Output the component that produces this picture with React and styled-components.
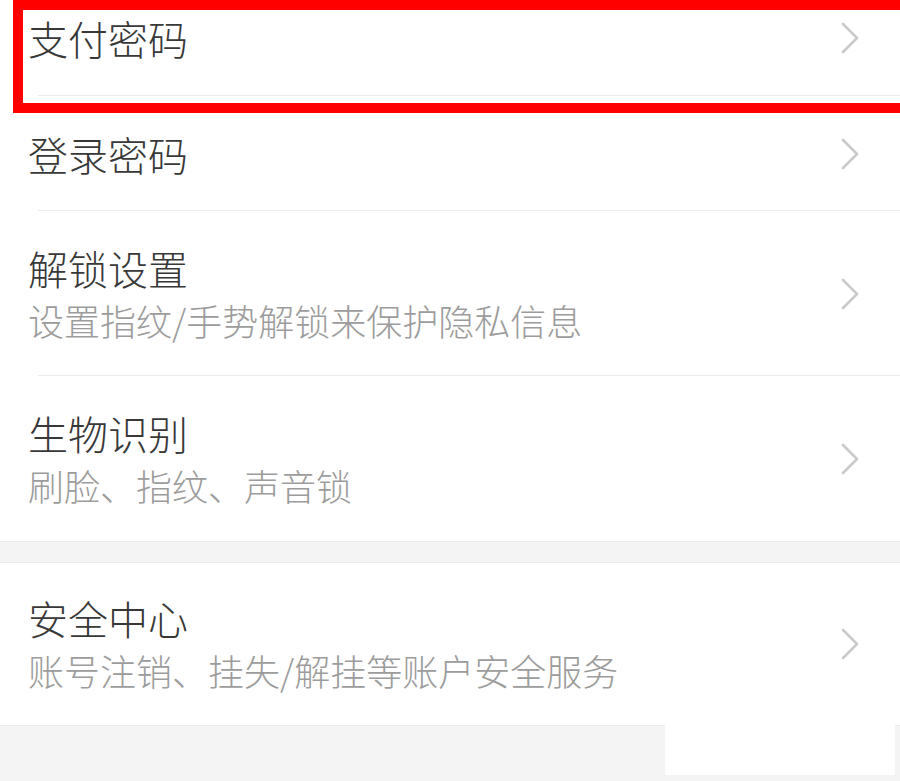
import React from "react";
import styled, { createGlobalStyle } from "styled-components";

const GlobalStyle = createGlobalStyle`
  html, body {
    margin: 0;
    padding: 0;
    background: #f4f4f4;
  }
  body {
    font-family: "Noto Sans CJK SC", "Noto Sans", sans-serif;
  }
`;

const Page = styled.div`
  position: relative;
  width: 900px;
  height: 781px;
  overflow: hidden;
  background: #f4f4f4;
`;

const Group = styled.div`
  background: #ffffff;
  border-bottom: 1px solid #e9e9e9;
  border-top: ${(p) => (p.$top ? "1px solid #e9e9e9" : "none")};
`;

const Gap = styled.div`
  height: 20px;
`;

const Row = styled.div`
  display: flex;
  align-items: center;
  justify-content: space-between;
  height: ${(p) => p.$h}px;
  box-sizing: border-box;
  padding: ${(p) => p.$pad || "0"};
  padding-left: 28px;
  padding-right: 40px;
  position: relative;
  &::after {
    content: "";
    display: ${(p) => (p.$line ? "block" : "none")};
    position: absolute;
    left: 38px;
    right: 0;
    bottom: 0;
    height: 1px;
    background: #ebebeb;
  }
`;

const Texts = styled.div`
  display: flex;
  flex-direction: column;
`;

const Title = styled.div`
  font-size: 40px;
  font-weight: 300;
  line-height: 52px;
  color: #383838;
`;

const Sub = styled.div`
  font-size: 36px;
  font-weight: 300;
  line-height: 52px;
  color: #9c9c9c;
`;

const Highlight = styled.div`
  position: absolute;
  left: 13px;
  top: 0;
  width: 900px;
  height: 113px;
  box-sizing: border-box;
  border: 10px solid #ff0000;
  pointer-events: none;
`;

const Mark = styled.div`
  position: absolute;
  left: 665px;
  top: 687px;
  width: 230px;
  height: 88px;
  background: #ffffff;
`;

const Chevron = () => (
  <svg width="20" height="32" viewBox="0 0 20 32">
    <path
      d="M3 2 L17 16 L3 30"
      fill="none"
      stroke="#cacaca"
      strokeWidth="2.6"
      strokeLinecap="round"
      strokeLinejoin="round"
    />
  </svg>
);

const top = [
  { title: "支付密码", h: 96, pad: "0 0 20px" },
  { title: "登录密码", h: 115 },
  { title: "解锁设置", sub: "设置指纹/手势解锁来保护隐私信息", h: 165 },
  { title: "生物识别", sub: "刷脸、指纹、声音锁", h: 165, last: true },
];

const Item = ({ item }) => (
  <Row $h={item.h} $pad={item.pad} $line={!item.last}>
    <Texts>
      <Title>{item.title}</Title>
      {item.sub && <Sub>{item.sub}</Sub>}
    </Texts>
    <Chevron />
  </Row>
);

export default function App() {
  return (
    <Page>
      <GlobalStyle />
      <Group>
        {top.map((item, i) => (
          <Item key={i} item={item} />
        ))}
      </Group>
      <Gap />
      <Group $top>
        <Item
          item={{
            title: "安全中心",
            sub: "账号注销、挂失/解挂等账户安全服务",
            h: 162,
            last: true,
          }}
        />
      </Group>
      <Highlight />
      <Mark />
    </Page>
  );
}
